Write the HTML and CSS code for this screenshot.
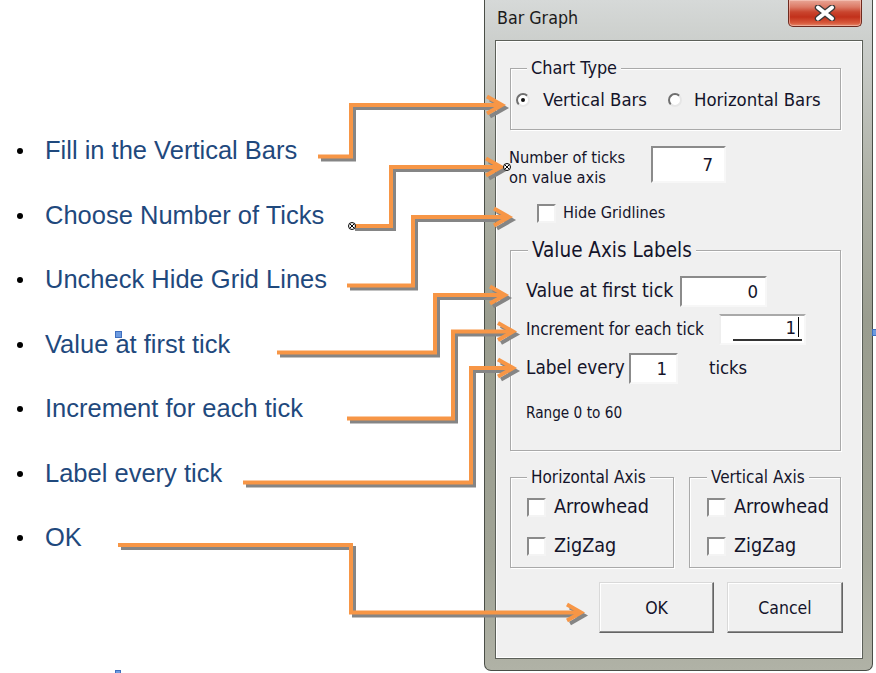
FILE: index.html
```html
<!DOCTYPE html>
<html>
<head>
<meta charset="utf-8">
<title>Bar Graph</title>
<link rel="stylesheet" href="styles.css">
</head>
<body>
<div class="page">
  <ul class="steps">
    <li>Fill in the Vertical Bars</li>
    <li>Choose Number of Ticks</li>
    <li>Uncheck Hide Grid Lines</li>
    <li>Value at first tick</li>
    <li>Increment for each tick</li>
    <li>Label every tick</li>
    <li>OK</li>
  </ul>

  <div class="window">
    <div class="titlebar">
      <span class="title">Bar Graph</span>
      <div class="close">
        <svg width="22" height="16" viewBox="0 0 22 16">
          <path d="M4 2.5L18 13.5M18 2.5L4 13.5" stroke="#3a3a3a" stroke-width="6.4" stroke-linecap="round" fill="none"/>
          <path d="M4 2.5L18 13.5M18 2.5L4 13.5" stroke="#ffffff" stroke-width="3.8" stroke-linecap="round" fill="none"/>
        </svg>
      </div>
    </div>

    <div class="client">
      <div class="group chart-type">
        <span class="legend chart-legend">Chart Type</span>
        <div class="radio-row">
          <span class="radio checked"></span><span class="opt first">Vertical Bars</span>
          <span class="radio second"></span><span class="opt">Horizontal Bars</span>
        </div>
      </div>

      <div class="ticks-row">
        <div class="ticks-label">Number of ticks<br>on value axis</div>
        <div class="textbox tb-ticks">7</div>
      </div>

      <div class="check-row gridlines">
        <span class="checkbox"></span><span class="check-text small">Hide Gridlines</span>
      </div>

      <div class="group value-axis">
        <span class="legend big">Value Axis Labels</span>
        <div class="field-row">
          <span class="flabel first-tick">Value at first tick</span>
          <div class="textbox tb-first">0</div>
        </div>
        <div class="field-row increment">
          <span class="flabel inc-label">Increment for each tick</span>
          <div class="textbox tb-inc"><span class="inc-inner">1<span class="caret"></span></span></div>
        </div>
        <div class="field-row every">
          <span class="flabel every-label">Label every</span>
          <div class="textbox tb-every">1</div>
          <span class="ticks-word">ticks</span>
        </div>
        <div class="range">Range 0 to 60</div>
      </div>

      <div class="axis-row">
        <div class="group axis-h">
          <span class="legend">Horizontal Axis</span>
          <div class="check-row"><span class="checkbox"></span><span class="check-text">Arrowhead</span></div>
          <div class="check-row second-check"><span class="checkbox"></span><span class="check-text">ZigZag</span></div>
        </div>
        <div class="group axis-v">
          <span class="legend">Vertical Axis</span>
          <div class="check-row"><span class="checkbox"></span><span class="check-text">Arrowhead</span></div>
          <div class="check-row second-check"><span class="checkbox"></span><span class="check-text">ZigZag</span></div>
        </div>
      </div>

      <div class="button-row">
        <div class="btn">OK</div>
        <div class="btn cancel">Cancel</div>
      </div>
    </div>
  </div>
</div>

<svg class="arrows" width="876" height="673" viewBox="0 0 876 673">
  <defs>
    <g id="conn">
      <path d="M318 156.5H351V105H500"/>
      <path d="M487 96.5L502 105L487 113.5"/>
      <path d="M352 226H391V167H499"/>
      <path d="M486 158.5L501 167L486 175.5"/>
      <path d="M347 285.5H413V217H507"/>
      <path d="M494 208.5L509 217L494 225.5"/>
      <path d="M277 352.5H435V295H503"/>
      <path d="M490 286.5L505 295L490 303.5"/>
      <path d="M347 418.5H453V331.5H511"/>
      <path d="M498 323L513 331.5L498 340"/>
      <path d="M243 482.5H471V368H511"/>
      <path d="M498 359.5L513 368L498 376.5"/>
      <path d="M118 545H351V612.5H579"/>
      <path d="M567 604.5L581 612.5L567 620.5"/>
    </g>
  </defs>
  <use href="#conn" transform="translate(3,3)" fill="none" stroke="#858585" stroke-width="4"/>
  <use href="#conn" fill="none" stroke="#f79646" stroke-width="4"/>
  <g class="marker">
    <circle cx="352" cy="226" r="3.5" fill="#fff" stroke="#000" stroke-width="1"/>
    <path d="M349.8 223.8L354.2 228.2M354.2 223.8L349.8 228.2" stroke="#000" stroke-width="1"/>
    <circle cx="507" cy="167" r="3.5" fill="#fff" stroke="#000" stroke-width="1"/>
    <path d="M504.8 164.8L509.2 169.2M509.2 164.8L504.8 169.2" stroke="#000" stroke-width="1"/>
  </g>
</svg>

<span class="handle handle-a"></span>
<span class="handle handle-b"></span>
<span class="handle handle-c"></span>
</body>
</html>
```

FILE: styles.css
```css
html, body {
  margin: 0;
  padding: 0;
  background: #ffffff;
}

body {
  width: 876px;
  height: 673px;
  overflow: hidden;
  position: relative;
}

.page {
  display: flex;
  align-items: flex-start;
}

/* ---------- bullet list ---------- */
.steps {
  flex: none;
  width: 484px;
  margin: 118px 0 0 0;
  padding: 0;
  list-style: none;
  font-family: "Liberation Sans", Arial, sans-serif;
  font-size: 25.5px;
  line-height: 64.5px;
  color: #1f497d;
}

.steps li {
  white-space: nowrap;
}

.steps li::before {
  content: "";
  display: inline-block;
  width: 6px;
  height: 6px;
  border-radius: 50%;
  background: #000;
  margin: 0 22px 0 17px;
  vertical-align: 5px;
}

/* ---------- window frame ---------- */
.window {
  flex: none;
  box-sizing: border-box;
  width: 389px;
  height: 671px;
  border: 1px solid #4a4e47;
  border-top: none;
  border-radius: 0 0 7px 7px;
  padding: 0 9px 11px 10px;
  display: flex;
  flex-direction: column;
  background: linear-gradient(to bottom, #d6d9d8 0px, #cbcecb 45px, #aeb1a6 180px, #9a9d8f 320px, #a0a395 560px, #b0b2a6 670px);
  font-family: "DejaVu Sans Condensed", "DejaVu Sans", sans-serif;
  font-stretch: condensed;
  color: #14142a;
}

.titlebar {
  flex: none;
  height: 40px;
  display: flex;
  justify-content: space-between;
  align-items: flex-start;
}

.title {
  padding: 7px 0 0 2px;
  font-size: 17.7px;
  line-height: 22px;
  color: #1b1b1b;
}

.close {
  box-sizing: border-box;
  width: 74px;
  height: 27px;
  margin-right: 1px;
  border: 1px solid #6e2a1f;
  border-top: none;
  border-radius: 0 0 5px 5px;
  background: linear-gradient(to bottom, #e9a797 0px, #dc7a66 7px, #c9452e 12px, #c2311b 17px, #d85a3c 23px, #e48a6c 26px);
  box-shadow: inset 0 0 0 1px rgba(255, 220, 210, 0.45);
  display: flex;
  justify-content: center;
  align-items: center;
}

.client {
  flex: 1;
  box-sizing: border-box;
  border: 1px solid #5c6059;
  box-shadow: inset 1px 1px 0 #ffffff, inset -1px -1px 0 #ffffff;
  background: #f0f0f0;
}

/* ---------- group boxes ---------- */
.group {
  position: relative;
  box-sizing: border-box;
  border: 1px solid #a9a9a9;
  box-shadow: 1px 1px 0 #ffffff, inset 1px 1px 0 #ffffff;
}

.legend {
  position: absolute;
  top: -11px;
  left: 16px;
  padding: 0 4px;
  background: #f0f0f0;
  font-size: 17px;
  line-height: 20px;
  white-space: nowrap;
}

.legend.chart-legend {
  font-size: 17.9px;
  top: -12px;
  line-height: 22px;
}

.legend.big {
  font-size: 20.5px;
  left: 17px;
  top: -13px;
  line-height: 24px;
}

.chart-type {
  width: 331px;
  height: 62px;
  margin: 27px 0 0 14px;
  padding: 20px 0 0 5px;
}

.radio-row {
  display: flex;
  align-items: center;
  height: 22px;
}

.radio {
  position: relative;
  box-sizing: border-box;
  width: 14px;
  height: 14px;
  border-radius: 50%;
  background: #ffffff;
  border: 2px solid;
  border-color: #6f6f6f #e6e6e6 #e6e6e6 #6f6f6f;
  flex: none;
}

.radio.checked::after {
  content: "";
  position: absolute;
  left: 3px;
  top: 3px;
  width: 4px;
  height: 4px;
  border-radius: 50%;
  background: #111;
}

.radio.second {
  margin-left: 21px;
}

.opt {
  margin-left: 12px;
  font-size: 18.4px;
  line-height: 22px;
  white-space: nowrap;
}

.opt.first {
  margin-left: 13px;
}

/* ---------- ticks ---------- */
.ticks-row {
  display: flex;
  align-items: flex-start;
  margin: 16px 0 0 13px;
}

.ticks-label {
  width: 142px;
  padding-top: 2px;
  font-size: 16.3px;
  line-height: 20px;
}

.textbox {
  box-sizing: border-box;
  background: #ffffff;
  border: 2px solid;
  border-color: #8b8b8b #f7f7f7 #f7f7f7 #8b8b8b;
  display: flex;
  align-items: center;
  justify-content: flex-end;
  font-size: 18.5px;
  flex: none;
}

.tb-ticks {
  width: 75px;
  height: 37px;
  padding-right: 11px;
}

/* ---------- checkboxes ---------- */
.check-row {
  display: flex;
  align-items: center;
  height: 20px;
}

.checkbox {
  flex: none;
  box-sizing: border-box;
  width: 19px;
  height: 19px;
  background: #ffffff;
  border: 2px solid;
  border-color: #8a8a8a #f4f4f4 #f4f4f4 #8a8a8a;
}

.check-text {
  margin-left: 8px;
  font-size: 19.6px;
  line-height: 20px;
  white-space: nowrap;
}

.check-text.small {
  margin-left: 7px;
  font-size: 16.2px;
}

.gridlines {
  margin: 15px 0 0 41px;
}

/* ---------- value axis labels ---------- */
.value-axis {
  width: 331px;
  height: 201px;
  margin: 27px 0 0 14px;
  padding: 25px 0 0 15px;
}

.field-row {
  display: flex;
  align-items: center;
}

.flabel {
  flex: none;
  white-space: nowrap;
}

.first-tick {
  width: 154px;
  font-size: 19.4px;
  margin-top: -3px;
}

.tb-first {
  width: 87px;
  height: 31px;
  padding-right: 7px;
}

.increment {
  margin-top: 7px;
}

.inc-label {
  width: 193px;
  font-size: 17px;
  margin-top: -2px;
}

.tb-inc {
  width: 87px;
  height: 31px;
  border-color: #a9a9a9 #f7f7f7 #f7f7f7 #eeeeee;
  padding: 0 2px 2px 12px;
  align-items: flex-end;
}

.inc-inner {
  flex: 1;
  display: flex;
  justify-content: flex-end;
  align-items: center;
  height: 24px;
  border-bottom: 2px solid #333333;
  padding-right: 3px;
}

.caret {
  display: inline-block;
  width: 1px;
  height: 20px;
  margin-left: 2px;
  background: #000;
}

.every {
  margin-top: 8px;
}

.every-label {
  width: 103px;
  font-size: 18.8px;
  margin-top: -3px;
}

.tb-every {
  width: 49px;
  height: 31px;
  padding-right: 9px;
}

.ticks-word {
  margin-left: 31px;
  font-size: 18.3px;
  margin-top: -3px;
}

.range {
  margin-top: 19px;
  font-size: 15.2px;
  line-height: 20px;
}

/* ---------- axis groups ---------- */
.axis-row {
  display: flex;
  margin: 26px 0 0 14px;
}

.axis-h {
  width: 164px;
  height: 91px;
  padding: 19px 0 0 16px;
}

.axis-v {
  width: 152px;
  height: 91px;
  margin-left: 15px;
  padding: 19px 0 0 17px;
}

.axis-v .legend {
  left: 17px;
}

.second-check {
  margin-top: 19px;
}

/* ---------- buttons ---------- */
.button-row {
  display: flex;
  margin: 14px 0 0 103px;
}

.btn {
  box-sizing: border-box;
  width: 115px;
  height: 51px;
  display: flex;
  align-items: center;
  justify-content: center;
  background: #f0f0f0;
  border: 1px solid;
  border-color: #d9d9d9 #646464 #646464 #d9d9d9;
  box-shadow: inset -1px -1px 0 #8f8f8f, inset 1px 1px 0 #ffffff;
  font-size: 17.5px;
}

.btn.cancel {
  width: 116px;
  margin-left: 13px;
}

/* ---------- annotation overlay ---------- */
.arrows {
  position: absolute;
  left: 0;
  top: 0;
  z-index: 5;
  pointer-events: none;
  stroke-linejoin: miter;
}

.handle {
  position: absolute;
  z-index: 6;
  box-sizing: border-box;
  background: #6d9be0;
  border: 1px solid #3f6fbf;
}

.handle-a {
  left: 115px;
  top: 331px;
  width: 7px;
  height: 7px;
}

.handle-b {
  left: 872px;
  top: 329px;
  width: 5px;
  height: 7px;
}

.handle-c {
  left: 115px;
  top: 670px;
  width: 6px;
  height: 4px;
}
```
